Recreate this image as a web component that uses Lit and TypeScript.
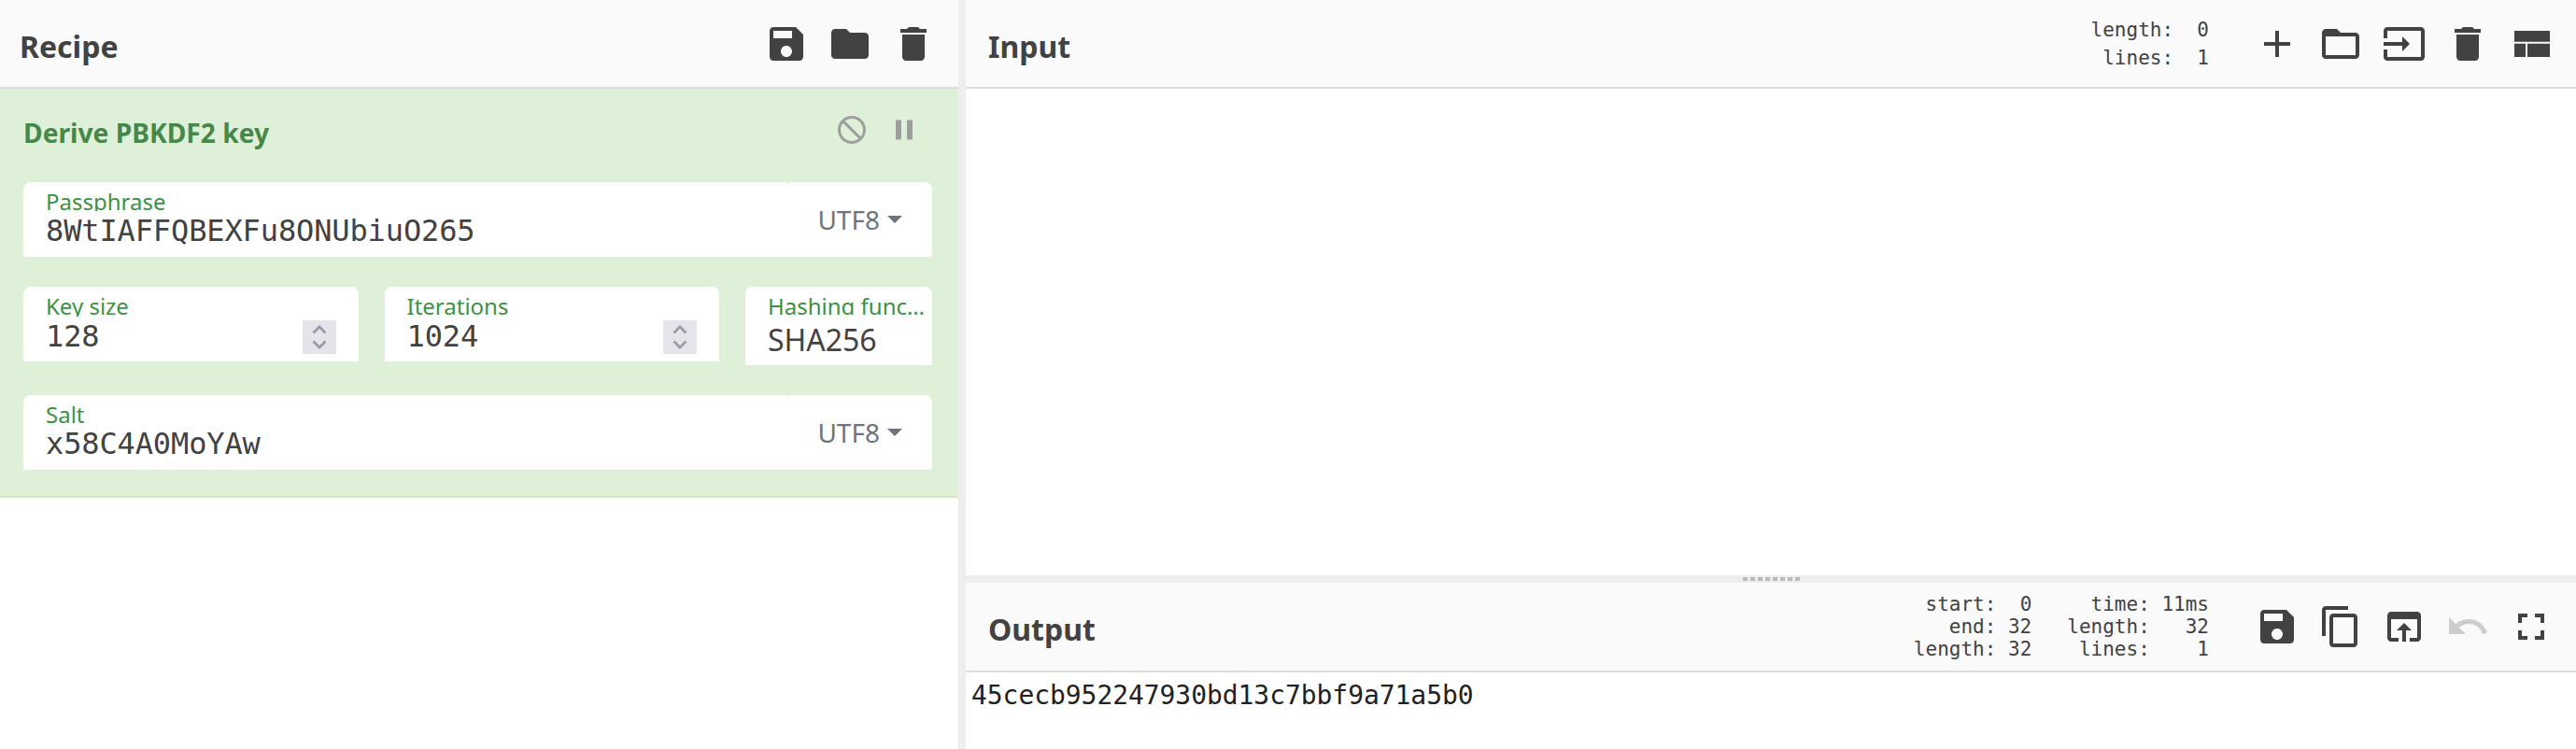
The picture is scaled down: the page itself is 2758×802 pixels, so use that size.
import { LitElement, html, css } from "lit";
import { customElement } from "lit/decorators.js";

const P = {
  save: "M17 3H5c-1.11 0-2 .9-2 2v14c0 1.1.89 2 2 2h14c1.1 0 2-.9 2-2V7l-4-4zm-5 16c-1.66 0-3-1.34-3-3s1.34-3 3-3 3 1.34 3 3-1.34 3-3 3zm3-10H5V5h10v4z",
  folder: "M10 4H4c-1.1 0-1.99.9-1.99 2L2 18c0 1.1.9 2 2 2h16c1.1 0 2-.9 2-2V8c0-1.1-.9-2-2-2h-8l-2-2z",
  del: "M6 19c0 1.1.9 2 2 2h8c1.1 0 2-.9 2-2V7H6v12zM19 4h-3.5l-1-1h-5l-1 1H5v2h14V4z",
  block: "M12 2C6.48 2 2 6.48 2 12s4.48 10 10 10 10-4.48 10-10S17.52 2 12 2zM4 12c0-4.42 3.58-8 8-8 1.85 0 3.55.63 4.9 1.69L5.69 16.9C4.63 15.55 4 13.85 4 12zm8 8c-1.85 0-3.55-.63-4.9-1.69L18.31 7.1C19.37 8.45 20 10.15 20 12c0 4.42-3.58 8-8 8z",
  pause: "M6 19h4V5H6v14zm8-14v14h4V5h-4z",
  add: "M19 13h-6v6h-2v-6H5v-2h6V5h2v6h6v2z",
  folderOpen: "M20 6h-8l-2-2H4c-1.1 0-1.99.9-1.99 2L2 18c0 1.1.9 2 2 2h16c1.1 0 2-.9 2-2V8c0-1.1-.9-2-2-2zm0 12H4V8h16v10z",
  input: "M21 3.01H3c-1.1 0-2 .9-2 2V9h2V4.99h18v14.03H3V15H1v4.01c0 1.1.9 1.98 2 1.98h18c1.1 0 2-.88 2-1.98v-14c0-1.11-.9-2-2-2zM11 16l4-4-4-4v3H1v2h10v3z",
  layout: "M3 5h19v5.85H3zM3 11.85h6V19H3zM10 11.85h12V19H10z",
  copy: "M16 1H4c-1.1 0-2 .9-2 2v14h2V3h12V1zm3 4H8c-1.1 0-2 .9-2 2v14c0 1.1.9 2 2 2h11c1.1 0 2-.9 2-2V7c0-1.1-.9-2-2-2zm0 16H8V7h11v14z",
  openIn: "M19 4H5c-1.11 0-2 .9-2 2v12c0 1.1.89 2 2 2h4v-2H5V8h14v10h-4v2h4c1.1 0 2-.9 2-2V6c0-1.1-.89-2-2-2zm-7 6l-4 4h3v6h2v-6h3l-4-4z",
  undo: "M12.5 8c-2.65 0-5.05.99-6.9 2.6L2 7v9h9l-3.62-3.62c1.39-1.16 3.16-1.88 5.12-1.88 3.54 0 6.55 2.31 7.6 5.5l2.37-.78C21.08 11.03 17.15 8 12.5 8z",
  fullscreen: "M7 14H5v5h5v-2H7v-3zm-2-4h2V7h3V5H5v5zm12 7h-3v2h5v-5h-2v3zM14 5v2h3v3h2V5h-5z",
};

const icon = (d: string, cls = "") =>
  html`<svg class="ico ${cls}" viewBox="0 0 24 24"><path d=${d}></path></svg>`;

@customElement("app-root")
export class AppRoot extends LitElement {
  static styles = css`
    :host {
      display: grid;
      grid-template-columns: 1026px 8px 1fr;
      height: 802px;
      width: 2758px;
      overflow: hidden;
      background: #fff;
      font-family: "Noto Sans", sans-serif;
      color: #424242;
    }
    .gutter-v { background: #eee; }
    .left, .right { display: flex; flex-direction: column; min-width: 0; }

    .head {
      box-sizing: border-box;
      flex: none;
      display: flex;
      align-items: center;
      height: 95px;
      padding: 0 24px 0 24px;
      background: #fafafa;
      border-bottom: 2px solid #ddd;
    }
    .left .head { padding-left: 21px; }
    .title { font-size: 32px; font-weight: 700; flex: 1; padding-top: 5px; }
    .btns { display: flex; gap: 20px; }
    .ico { display: block; width: 48px; height: 48px; fill: #424242; }
    .ico.off { fill: #ccc; }
    .ico.mirror { transform: scaleX(-1); }

    .status {
      margin: 0 49px 0 0;
      display: flex;
      gap: 38px;
      font-family: "DejaVu Sans Mono", monospace;
      font-size: 21px;
      text-align: right;
      color: #424242;
    }
    .status pre { margin: 0; font: inherit; line-height: 24px; }
    .status.loose pre { line-height: 30px; }

    .op {
      box-sizing: border-box;
      height: 438px;
      flex: none;
      background: #dff0d8;
      border-bottom: 2px solid #d6e9c6;
      padding: 0 28px 0 25px;
      display: flex;
      flex-direction: column;
    }
    .op-head { height: 100px; display: flex; align-items: flex-start; }
    .op-title {
      flex: 1;
      font-size: 28.2px;
      font-weight: 700;
      color: #468847;
      line-height: 40px;
      margin-top: 27px;
    }
    .op-btns { display: flex; gap: 20px; margin: 26px 12px 0 0; }
    .op-btns .ico { width: 36px; height: 36px; fill: #9e9e9e; }
    .fields { display: grid; row-gap: 32px; }
    .row3 { display: grid; grid-template-columns: 1fr 1fr 200px; column-gap: 28px; align-items: start; }

    .lbl {
      display: block;
      height: 22px;
      font-size: 24px;
      line-height: 23px;
      color: #3a9344;
      white-space: nowrap;
      overflow: hidden;
      text-overflow: ellipsis;
    }
    .val {
      font-family: "DejaVu Sans Mono", monospace;
      font-size: 32px;
      line-height: 36px;
      letter-spacing: -0.12px;
      color: #424242;
      white-space: pre;
      margin-top: 3px;
    }
    .split { display: flex; height: 80px; }
    .split .main {
      flex: 1;
      background: #fff;
      border-radius: 8px 3px 0 0;
      padding: 9px 0 0 24px;
      box-sizing: border-box;
    }
    .split .enc {
      flex: none;
      width: 155px;
      box-sizing: border-box;
      background: #fff;
      border-radius: 3px 8px 3px 0;
      display: flex;
      align-items: center;
      justify-content: flex-end;
      gap: 8px;
      padding: 0 32px 0 0;
      font-size: 28px;
      color: #6c757d;
    }
    .caret {
      width: 0;
      height: 0;
      border-left: 8px solid transparent;
      border-right: 8px solid transparent;
      border-top: 8px solid #6c757d;
    }
    .num {
      box-sizing: border-box;
      height: 80px;
      background: #fff;
      border-radius: 8px 8px 0 0;
      padding: 9px 24px 0 24px;
      display: flex;
      min-width: 0;
    }
    .num .body { flex: 1; }
    .num .lbl { height: 23px; }
    .spin {
      width: 36px;
      height: 36px;
      margin-top: 27px;
      background: #e4e4ea;
      fill: none;
      stroke: #9a9aa8;
      stroke-width: 2.8;
      display: block;
    }
    .sel {
      box-sizing: border-box;
      height: 84px;
      background: #fff;
      border-radius: 8px 8px 0 0;
      padding: 9px 4px 0 24px;
      min-width: 0;
    }
    .sel .lbl { height: 21px; }
    .sel .v {
      font-size: 32px;
      line-height: 44px;
      margin-top: 5px;
      color: #424242;
    }

    .in-body { flex: 1; background: #fff; }
    .gutter-h {
      flex: none;
      height: 8px;
      background: #eee;
      display: flex;
      justify-content: center;
      align-items: center;
    }
    .grip {
      width: 61px;
      height: 4px;
      background: repeating-linear-gradient(90deg, #bbb 0 5px, transparent 5px 8px);
    }
    .out-head { height: 96px; }
    .out-body {
      height: 82px;
      flex: none;
      box-sizing: border-box;
      padding: 8px 0 0 6px;
      font-family: "DejaVu Sans Mono", monospace;
      font-size: 28px;
      line-height: 34px;
      letter-spacing: -0.06px;
      color: #212121;
    }
  `;

  private enc() {
    return html`<div class="enc">UTF8<span class="caret"></span></div>`;
  }

  private spin() {
    return html`<svg class="spin" viewBox="0 0 36 36">
      <path d="M11.5 13.5L18 7l6.5 6.5M11.5 22.5L18 29l6.5-6.5"></path>
    </svg>`;
  }

  render() {
    return html`
      <section class="left">
        <header class="head">
          <div class="title">Recipe</div>
          <div class="btns">${icon(P.save)}${icon(P.folder)}${icon(P.del)}</div>
        </header>
        <div class="op">
          <div class="op-head">
            <div class="op-title">Derive PBKDF2 key</div>
            <div class="op-btns">${icon(P.block, "mirror")}${icon(P.pause)}</div>
          </div>
          <div class="fields">
            <div class="split">
              <div class="main">
                <span class="lbl">Passphrase</span>
                <div class="val">8WtIAFFQBEXFu8ONUbiuO265</div>
              </div>
              ${this.enc()}
            </div>
            <div class="row3">
              <div class="num">
                <div class="body"><span class="lbl">Key size</span><div class="val">128</div></div>
                ${this.spin()}
              </div>
              <div class="num">
                <div class="body"><span class="lbl">Iterations</span><div class="val">1024</div></div>
                ${this.spin()}
              </div>
              <div class="sel">
                <span class="lbl">Hashing function</span>
                <div class="v">SHA256</div>
              </div>
            </div>
            <div class="split">
              <div class="main">
                <span class="lbl">Salt</span>
                <div class="val">x58C4A0MoYAw</div>
              </div>
              ${this.enc()}
            </div>
          </div>
        </div>
      </section>
      <div class="gutter-v"></div>
      <section class="right">
        <header class="head">
          <div class="title">Input</div>
          <div class="status loose"><pre>length:  0
 lines:  1</pre></div>
          <div class="btns">${icon(P.add)}${icon(P.folderOpen)}${icon(P.input)}${icon(P.del)}${icon(P.layout)}</div>
        </header>
        <div class="in-body"></div>
        <div class="gutter-h"><div class="grip"></div></div>
        <header class="head out-head">
          <div class="title">Output</div>
          <div class="status"><pre>start:  0
end: 32
length: 32</pre><pre>time: 11ms
length:   32
lines:    1</pre></div>
          <div class="btns">${icon(P.save)}${icon(P.copy)}${icon(P.openIn)}${icon(P.undo, "off")}${icon(P.fullscreen)}</div>
        </header>
        <div class="out-body">45cecb952247930bd13c7bbf9a71a5b0</div>
      </section>
    `;
  }
}
